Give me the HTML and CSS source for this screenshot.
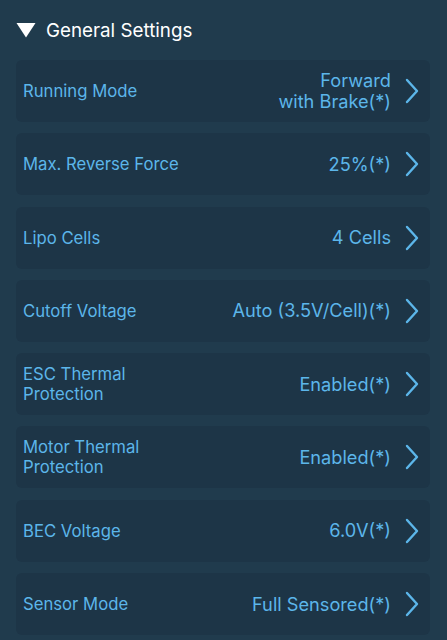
FILE: index.html
```html
<!DOCTYPE html>
<html>
<head>
<meta charset="utf-8">
<link rel="stylesheet" href="styles.css">
</head>
<body>
<div class="page">
  <div class="header">
    <svg class="tri" width="20" height="16" viewBox="0 0 20 16"><path d="M0.5 1 H19.5 L10 15.5 Z" fill="#fff"/></svg>
    <span class="title">General Settings</span>
  </div>
  <div class="list">
    <div class="card"><div class="label">Running Mode</div><div class="value">Forward<br>with Brake(*)</div><svg class="chev" width="14" height="26" viewBox="0 0 14 26"><path d="M2 2 L12 13 L2 24" /></svg></div>
    <div class="card"><div class="label">Max. Reverse Force</div><div class="value">25%(*)</div><svg class="chev" width="14" height="26" viewBox="0 0 14 26"><path d="M2 2 L12 13 L2 24" /></svg></div>
    <div class="card"><div class="label">Lipo Cells</div><div class="value">4 Cells</div><svg class="chev" width="14" height="26" viewBox="0 0 14 26"><path d="M2 2 L12 13 L2 24" /></svg></div>
    <div class="card"><div class="label">Cutoff Voltage</div><div class="value">Auto (3.5V/Cell)(*)</div><svg class="chev" width="14" height="26" viewBox="0 0 14 26"><path d="M2 2 L12 13 L2 24" /></svg></div>
    <div class="card"><div class="label">ESC Thermal<br>Protection</div><div class="value">Enabled(*)</div><svg class="chev" width="14" height="26" viewBox="0 0 14 26"><path d="M2 2 L12 13 L2 24" /></svg></div>
    <div class="card"><div class="label">Motor Thermal<br>Protection</div><div class="value">Enabled(*)</div><svg class="chev" width="14" height="26" viewBox="0 0 14 26"><path d="M2 2 L12 13 L2 24" /></svg></div>
    <div class="card"><div class="label">BEC Voltage</div><div class="value">6.0V(*)</div><svg class="chev" width="14" height="26" viewBox="0 0 14 26"><path d="M2 2 L12 13 L2 24" /></svg></div>
    <div class="card"><div class="label">Sensor Mode</div><div class="value">Full Sensored(*)</div><svg class="chev" width="14" height="26" viewBox="0 0 14 26"><path d="M2 2 L12 13 L2 24" /></svg></div>
  </div>
</div>
</body>
</html>
```
FILE: styles.css
```css
html, body {
  margin: 0;
  padding: 0;
  background: #203b4d;
  height: 100%;
  overflow: hidden;
}
.page {
  padding: 0 17px 0 16px;
  font-family: Inter, "Liberation Sans", sans-serif;
}
.header {
  display: flex;
  align-items: center;
  height: 60px;
  gap: 10px;
}
.tri { display: block; }
.title {
  color: #ffffff;
  font-size: 18.8px;
}
.list {
  display: flex;
  flex-direction: column;
  gap: 11.3px;
}
.card {
  height: 62px;
  box-sizing: border-box;
  background: #1d3547;
  border-radius: 6px;
  display: flex;
  align-items: center;
  padding: 0 11px 0 7px;
  color: #5cb6ea;
}
.label {
  flex: 1;
  font-size: 16.7px;
  line-height: 20px;
}
.value {
  text-align: right;
  font-size: 18.2px;
  line-height: 21px;
  margin-right: 14px;
}
.chev {
  display: block;
  fill: none;
  stroke: #5cb6ea;
  stroke-width: 2.4;
  stroke-linecap: round;
  stroke-linejoin: round;
}
```
